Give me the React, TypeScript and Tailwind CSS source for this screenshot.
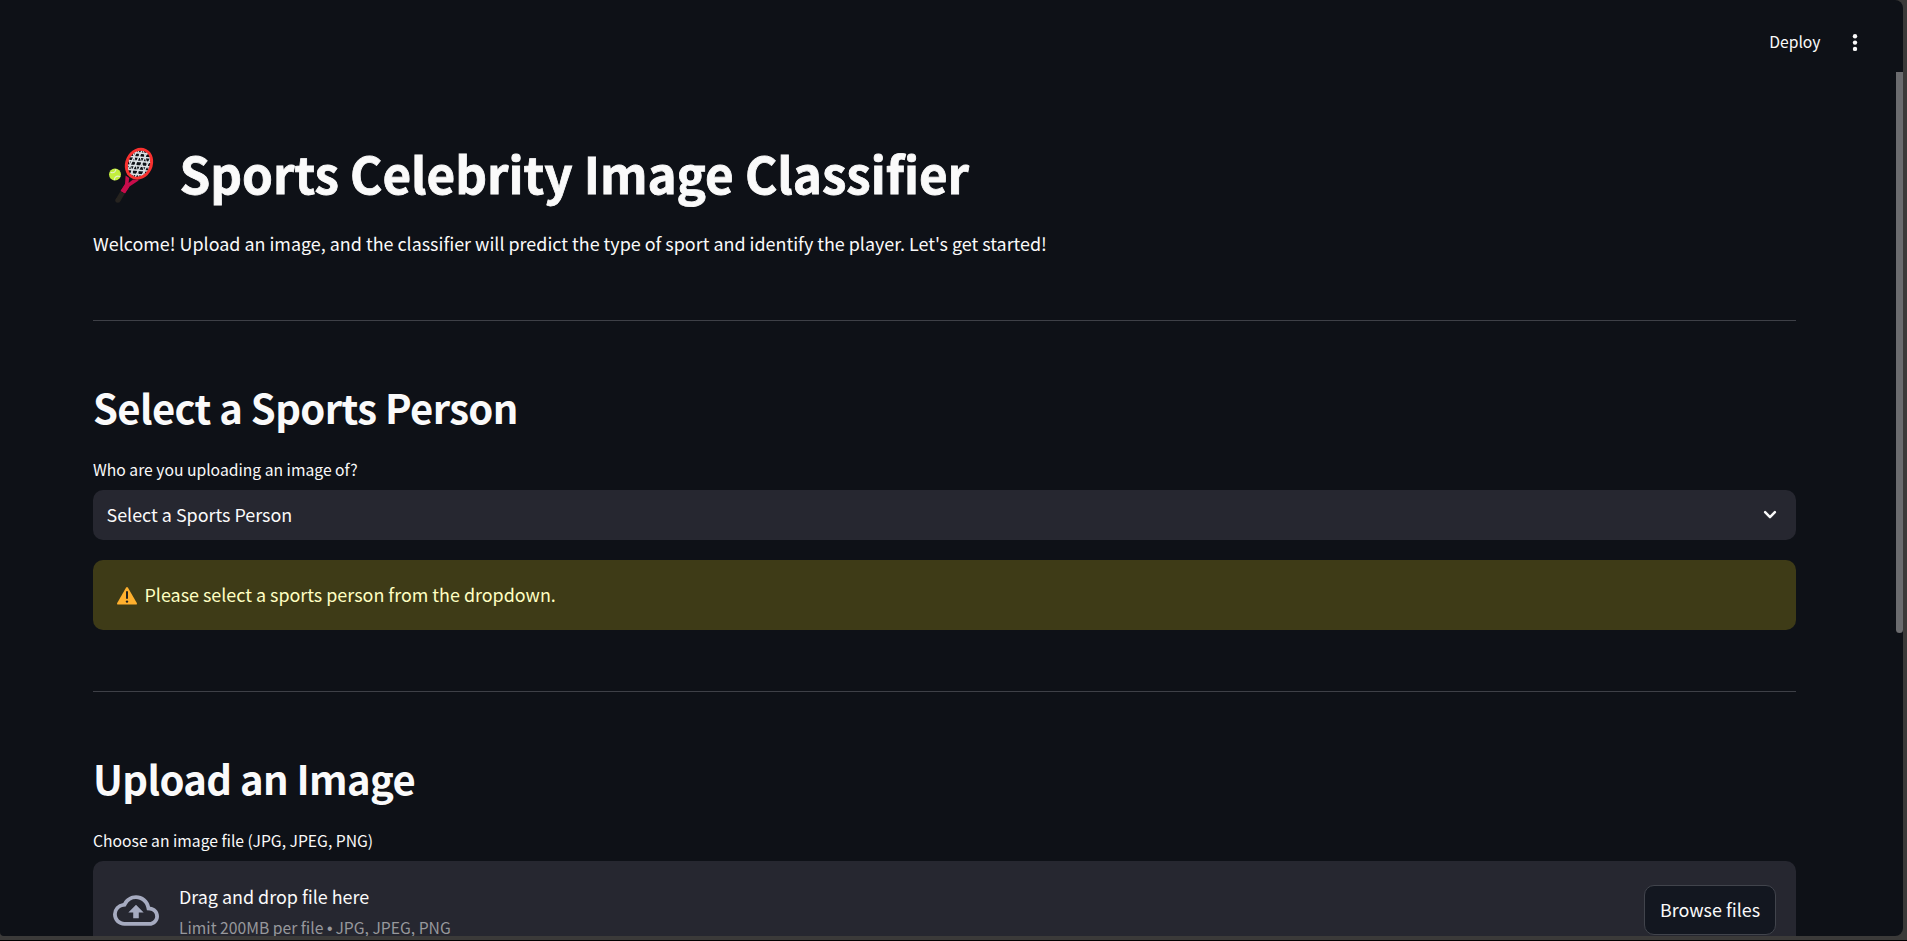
import type { ReactNode } from "react";

function Racket() {
  return (
    <svg viewBox="0 0 60 70" className="h-[70px] w-[60px] shrink-0" fill="none">
      <path d="M25.6 35.500 L25 44 L20.500 51 L25 53.500 L29.500 46.600 L39 40.300 L33 39.500 L28.600 43 L29.200 38 Z" fill="#c80d4b" />
      <path d="M27.3 45.3 L22.8 52" stroke="#c80d4b" strokeWidth="4.8" />
      <path d="M22.6 52.5 L18 60.200" stroke="#26231f" strokeWidth="5" strokeLinecap="butt" />
      <circle cx="17.8" cy="60.3" r="2.500" fill="#26231f" />
      <g stroke="#dce2e6" strokeWidth="1.5">
        <path d="M33 12.500l15 1.200M30 16.500l21 1.600M27.500 20.500l24 2M26.500 24.900l24.500 2.200M26.500 29.300l23 2M27.500 33.700l18 1.600" />
        <path d="M37 10.500l-9.500 20M42 10.500L30 35.500M47 12.500L35 37.500M51 17.500L41 37.500" />
        <path d="M33 12.500l6 25M38 9.500l7 25M43 9.500l5.500 20M28.500 18.500l5 18" strokeWidth="1" />
      </g>
      <ellipse cx="39" cy="23.7" rx="12.2" ry="14.9" transform="rotate(25 39 23.7)" stroke="#f8312f" strokeWidth="2.900" />
      <circle cx="15" cy="34.6" r="6" fill="#c3ef3c" />
      <path d="M10.5 32.2c3 1.200 5.300.2 5.400-3.300M14.200 40.200c.2-3.400 2.200-4.800 6-3.600" stroke="#e4efc8" strokeWidth="1.1" />
    </svg>
  );
}

function Warning() {
  return (
    <svg viewBox="0 0 20 18" className="mt-px h-[18px] w-5 shrink-0">
      <path d="M9 .8Q10-.6 11 .8L19.8 16Q20.4 17.6 18.8 17.6H1.2Q-.4 17.6.2 16Z" fill="#ffb02e" />
      <path d="M10 5v6" stroke="#212121" strokeWidth="2" strokeLinecap="round" />
      <circle cx="10" cy="14.6" r="1.2" fill="#212121" />
    </svg>
  );
}

function Divider() {
  return <div className="h-px shrink-0 bg-[#3e4047]" />;
}

function Heading({ children }: { children: ReactNode }) {
  return <h2 className="h-[54px] text-[40px] leading-[53px] font-semibold tracking-[-0.61px]">{children}</h2>;
}

function Label({ children }: { children: ReactNode }) {
  return <div className="h-[26px] text-[15.7px] leading-[26px]">{children}</div>;
}

export default function App() {
  return (
    <div className="flex h-[941px] w-[1907px] flex-col overflow-hidden bg-black font-['Noto_Sans_CJK_SC','Source_Sans_Pro',sans-serif] whitespace-nowrap text-[#fafafa]">
      <div className="flex h-[940px] bg-[#3b3a39] pr-1 pb-1">
        <div className="flex h-[936px] w-[1903px] overflow-hidden rounded-tr-lg rounded-br-lg rounded-bl-sm bg-[#0e1117]">
          <div className="flex w-[1896px] shrink-0 flex-col">
            <header className="flex h-[75px] shrink-0 items-start justify-end pt-[29px] pr-[35px]">
              <span className="text-[15.7px] leading-[26px]">Deploy</span>
              <svg viewBox="0 0 12 24" className="mt-[2px] ml-[28.5px] h-6 w-3" fill="#fafafa">
                <circle cx="6" cy="5.3" r="2.2" />
                <circle cx="6" cy="11.6" r="2.2" />
                <circle cx="6" cy="17.9" r="2.2" />
              </svg>
            </header>
            <main className="ml-[93px] flex w-[1703px] flex-col">
              <div className="mt-[65px] flex h-[70px]">
                <div className="ml-[7px]">
                  <Racket />
                </div>
                <h1 className="ml-[19.5px] text-[49.4px] leading-[66px] font-bold tracking-[-0.05px] [-webkit-text-stroke:0.8px_#fafafa]">
                  Sports Celebrity Image Classifier
                </h1>
              </div>
              <p className="mt-[18px] h-[31px] text-[17.91px] leading-[30px]">
                Welcome! Upload an image, and the classifier will predict the type of sport and identify the player. Let's get started!
              </p>
              <div className="mt-[61px]">
                <Divider />
              </div>
              <div className="mt-[60px]">
                <Heading>Select a Sports Person</Heading>
              </div>
              <div className="mt-[22px]">
                <Label>Who are you uploading an image of?</Label>
              </div>
              <div className="mt-[7px] flex h-[50px] items-center justify-between rounded-[10px] bg-[#262730] pr-[19px] pl-[13.5px] text-[17.91px] leading-[30px]">
                <span className="pb-0.5">Select a Sports Person</span>
                <svg viewBox="0 0 14 10" className="h-[10px] w-[14px]" fill="none" stroke="#fafafa" strokeWidth="2.5" strokeLinecap="round" strokeLinejoin="round">
                  <path d="M2.1 2.2L7 7.1l4.9-4.9" />
                </svg>
              </div>
              <div className="mt-5 flex h-[70px] items-center rounded-[10px] bg-[#3e3b17] pl-[24px] text-[17.91px] leading-[30px] text-[#ffffc2]">
                <Warning />
                <span className="ml-[7.5px] pb-0.5">Please select a sports person from the dropdown.</span>
              </div>
              <div className="mt-[61px]">
                <Divider />
              </div>
              <div className="mt-[60px]">
                <Heading>Upload an Image</Heading>
              </div>
              <div className="mt-[22px]">
                <Label>Choose an image file (JPG, JPEG, PNG)</Label>
              </div>
              <section className="mt-[7px] flex h-[98px] items-center rounded-[10px] bg-[#262730] px-5">
                <svg viewBox="0 0 24 16" className="h-[31px] w-[46px] shrink-0" fill="#a6abc0">
                  <path d="M19.35 6.04A7.49 7.49 0 0 0 12 0C9.11 0 6.6 1.64 5.35 4.04A5.994 5.994 0 0 0 0 10c0 3.31 2.69 6 6 6h13c2.76 0 5-2.24 5-5 0-2.64-2.05-4.78-4.65-4.96zM19 14H6c-2.21 0-4-1.79-4-4 0-2.05 1.53-3.76 3.56-3.97l1.07-.11.5-.95A5.469 5.469 0 0 1 12 2c2.62 0 4.88 1.86 5.39 4.43l.3 1.5 1.53.11A2.98 2.98 0 0 1 22 11c0 1.65-1.35 3-3 3zM8 9h2.55v3h2.9V9H16l-4-4z" />
                </svg>
                <div className="ml-5 flex flex-col pt-1">
                  <span className="text-[17.91px] leading-8">Drag and drop file here</span>
                  <span className="text-[15.7px] leading-[31px] text-[#97989c]">
                    Limit 200MB per file <span className="inline-block w-[5px] font-['Liberation_Sans']">•</span> JPG, JPEG, PNG
                  </span>
                </div>
                <button className="ml-auto h-[50px] w-[132px] rounded-[10px] border border-[#41444c] bg-[#131720] pb-0.5 text-[17.91px] leading-[30px]">
                  Browse files
                </button>
              </section>
            </main>
          </div>
          <div className="mt-[72px] h-[561px] w-[7px] shrink-0 rounded-b bg-[#6b6c6f]" />
        </div>
      </div>
    </div>
  );
}
